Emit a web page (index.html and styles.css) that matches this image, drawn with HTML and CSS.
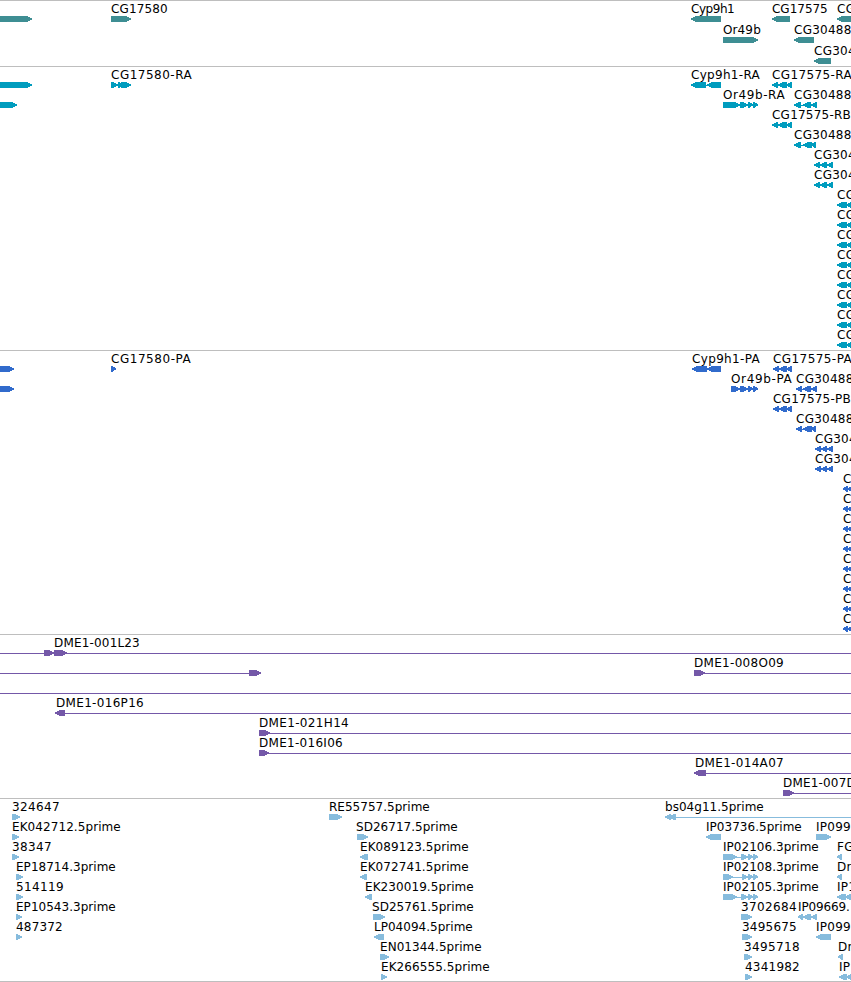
FILE: index.html
```html
<!DOCTYPE html>
<html lang="en">
<head>
<meta charset="utf-8">
<title>Genome tracks</title>
<link rel="stylesheet" href="styles.css">
</head>
<body>
<main class="browser" id="browser"></main>
<script src="tracks.js"></script>
</body>
</html>
```

FILE: styles.css
```css
body {
  margin: 0;
  background: #fff;
}

.browser {
  display: flex;
  flex-direction: column;
  width: 851px;
  height: 982px;
  overflow: hidden;
}

.track {
  box-sizing: border-box;
  flex: none;
  border-top: 1px solid #bebebe;
  overflow: hidden;
}

.track svg {
  display: block;
  width: 851px;
  height: 100%;
}

.label {
  font: 12px "DejaVu Sans", sans-serif;
  letter-spacing: 0.25px;
  fill: #000;
}

.glyph {
  shape-rendering: crispEdges;
}

.gene { fill: #3e8e93; }
.transcript { fill: #009cbe; }
.protein { fill: #316bcc; }
.clone { fill: #7458a8; }
.est { fill: #87bcdd; }
```

FILE: tracks.js
```js
// Feature: [row, label, label start, label end (0 = natural width), glyph parts]
// Glyph part: [kind, start, end]; kind is r (arrow right), l (arrow left) or n (connector line)
const parts = text => text ? text.split(' ').map(p => {
  const [a, b] = p.slice(1).split('-').map(Number);
  return [p[0], a, b];
}) : [];

const tracks = [
  { kind: 'gene', height: 66, step: 21, features: [
    [0, '', 0, 0, 'r0-32'], [0, 'CG17580', 111, 168, 'r111-131'],
    [0, 'Cyp9h1', 691, 735, 'l691-721'], [0, 'CG17575', 772, 828, 'l772-790'],
    [0, 'CG', 837, 0, 'l837-856'], [1, 'Or49b', 723, 761, 'r723-758'],
    [1, 'CG30488', 794, 0, 'l794-814'], [2, 'CG304', 814, 0, 'l814-831']
  ] },
  { kind: 'transcript', height: 284, step: 20, features: [
    [0, '', 0, 0, 'r0-32'], [1, '', 0, 0, 'r0-17'],
    [0, 'CG17580-RA', 111, 192, 'r111-118 r118-124 r121-131'],
    [0, 'Cyp9h1-RA', 691, 760, 'l691-706 n705-709 l707-721'],
    [0, 'CG17575-RA', 772, 852, 'l772-778 l778-787 l786-792'],
    [1, 'Or49b-RA', 723, 785, 'r723-740 r740-748 r748-753 r753-758'],
    [1, 'CG30488', 794, 0, 'l794-801 n800-804 l803-811 l811-817'],
    [2, 'CG17575-RB', 772, 851, 'l772-778 l778-787 l786-792'],
    [3, 'CG30488', 794, 0, 'l794-801 n800-804 l803-812 l811-816'],
    [4, 'CG304', 814, 0, 'l814-820 l820-827 l827-833'],
    [5, 'CG304', 814, 0, 'l814-820 l820-827 l827-833'],
    ...[6, 7, 8, 9, 10, 11, 12, 13].map(row => [row, 'CG', 837, 0, 'l837-847 l846-855'])
  ] },
  { kind: 'protein', height: 284, step: 20, features: [
    [0, '', 0, 0, 'r0-14'], [1, '', 0, 0, 'r0-14'],
    [0, 'CG17580-PA', 111, 191, 'r111-116'],
    [0, 'Cyp9h1-PA', 692, 760, 'l692-707 n706-709 l707-721'],
    [0, 'CG17575-PA', 773, 852, 'l773-779 l779-787 l786-792'],
    [1, 'Or49b-PA', 731, 792, 'r731-740 r740-748 r748-753 r753-758'],
    [1, 'CG30488', 796, 0, 'l796-802 n801-805 l803-811 l811-817'],
    [2, 'CG17575-PB', 773, 851, 'l773-779 l779-787 l786-792'],
    [3, 'CG30488', 796, 0, 'l796-802 n801-805 l803-812 l811-816'],
    [4, 'CG304', 815, 0, 'l815-821 l821-827 l827-833'],
    [5, 'CG304', 815, 0, 'l815-821 l821-827 l827-833'],
    ...[6, 7, 8, 9, 10, 11, 12, 13].map(row => [row, 'C', 843, 0, 'l843-848 l847-854'])
  ] },
  { kind: 'clone', height: 164, step: 20, features: [
    [0, '', 0, 0, 'n0-45 r44-54'], [0, 'DME1-001L23', 54, 140, 'r54-67 n62-851'],
    [1, '', 0, 0, 'n0-250 r249-261'], [1, 'DME1-008O09', 694, 784, 'r694-705 n700-851'],
    [2, '', 0, 0, 'n0-851'], [3, 'DME1-016P16', 56, 144, 'l55-65 n64-851'],
    [4, 'DME1-021H14', 259, 349, 'r259-270 n264-851'],
    [5, 'DME1-016I06', 259, 343, 'r259-269 n264-851'],
    [6, 'DME1-014A07', 695, 784, 'l694-706 n705-851'],
    [7, 'DME1-007D', 783, 856, 'r783-794 n789-851']
  ] },
  { kind: 'est', height: 183, step: 20, features: [
    [0, '324647', 12, 60, 'r12-20'], [1, 'EK042712.5prime', 12, 121, 'r12-19'],
    [2, '38347', 12, 52, 'r12-19'], [3, 'EP18714.3prime', 16, 116, 'r16-23'],
    [4, '514119', 16, 64, 'r16-23'], [5, 'EP10543.3prime', 16, 116, 'r16-22'],
    [6, '487372', 16, 63, 'r16-22'],
    [0, 'RE55757.5prime', 329, 430, 'r329-342'], [1, 'SD26717.5prime', 356, 458, 'r357-368'],
    [2, 'EK089123.5prime', 360, 469, 'l360-368'], [3, 'EK072741.5prime', 360, 469, 'l360-367'],
    [4, 'EK230019.5prime', 365, 474, 'l365-372'], [5, 'SD25761.5prime', 372, 474, 'r373-385'],
    [6, 'LP04094.5prime', 374, 473, 'l374-384'], [7, 'EN01344.5prime', 380, 482, 'r380-389'],
    [8, 'EK266555.5prime', 381, 490, 'r381-387'],
    [0, 'bs04g11.5prime', 665, 764, 'l665-671 l669-676 n675-851'],
    [1, 'IP03736.5prime', 706, 802, 'l706-721'], [1, 'IP099', 816, 851, 'r816-831'],
    [2, 'IP02106.3prime', 723, 819, 'r723-737 n734-742 r741-748 r748-753 r753-758'],
    [3, 'IP02108.3prime', 723, 819, 'r723-733 n731-743 r742-748 r748-753 r753-758'],
    [4, 'IP02105.3prime', 723, 819, 'r723-737 n734-742 r741-748 r748-753 r753-758'],
    [2, 'FG', 837, 0, 'l837-842'], [3, 'Dr', 837, 0, 'l837-842'],
    [4, 'IP1', 837, 0, 'l837-846 l845-853'],
    [5, '3702684', 741, 797, 'r741-752'], [5, 'IP09669.', 798, 850, 'l798-803 l803-811 l811-817'],
    [6, '3495675', 742, 797, 'r742-752'], [6, 'IP099', 816, 851, 'l816-831'],
    [7, '3495718', 744, 800, 'r744-752'], [7, 'Dr', 838, 0, 'l838-843'],
    [8, '4341982', 745, 800, 'r745-752'], [8, 'IP', 839, 0, 'l839-847 l846-853']
  ] }
];

function shape([type, a, b], y) {
  if (type === 'n') return `M${a} ${y + 3}H${b}v1H${a}z`;
  const head = Math.min(b - a, 6);
  return type === 'r'
    ? `M${a} ${y}H${b - head + 1}L${b} ${y + 2.3}V${y + 3.6}L${b - head + 1} ${y + 6}H${a}z`
    : `M${b} ${y}H${a + head - 1}L${a} ${y + 2.3}V${y + 3.6}L${a + head - 1} ${y + 6}H${b}z`;
}

document.getElementById('browser').innerHTML = tracks.map(track => {
  const body = track.features.map(([row, name, start, end, glyph]) => {
    const y = 15 + row * track.step;
    const fit = end ? ` textLength="${end - start}"` : '';
    const label = name ? `<text class="label" x="${start}" y="${y - 3}"${fit}>${name}</text>` : '';
    const paths = parts(glyph).map(p => `<path d="${shape(p, y)}"/>`).join('');
    return `${label}<g class="glyph ${track.kind}">${paths}</g>`;
  }).join('');
  return `<section class="track" style="height:${track.height}px"><svg>${body}</svg></section>`;
}).join('') + '<div class="track"></div>';
```
